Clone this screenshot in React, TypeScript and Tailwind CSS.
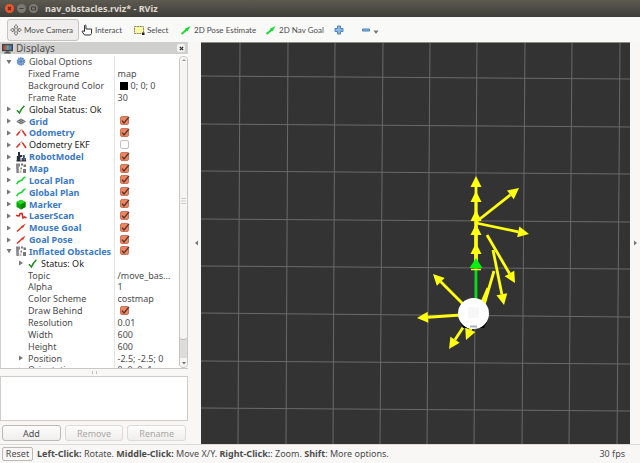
import React, { useState } from 'react';
import clsx from 'clsx';

type IconName =
	| 'gear'
	| 'ok'
	| 'grid'
	| 'odometry'
	| 'robot'
	| 'map'
	| 'path'
	| 'marker'
	| 'laser'
	| 'goal';

interface DisplayRow {
	label: string;
	value?: string;
	checked?: boolean;
	icon?: IconName;
	enabled?: boolean;
	strong?: boolean;
	nested?: boolean;
	swatch?: boolean;
	arrow?: 'open' | 'closed';
}

const rows: DisplayRow[] = [
	{ label: 'Global Options', icon: 'gear', arrow: 'open' },
	{ label: 'Fixed Frame', value: 'map' },
	{ label: 'Background Color', value: '0; 0; 0', swatch: true },
	{ label: 'Frame Rate', value: '30' },
	{ label: 'Global Status: Ok', icon: 'ok', arrow: 'closed', strong: true },
	{ label: 'Grid', icon: 'grid', arrow: 'closed', checked: true, enabled: true },
	{ label: 'Odometry', icon: 'odometry', arrow: 'closed', checked: true, enabled: true },
	{ label: 'Odometry EKF', icon: 'odometry', arrow: 'closed', checked: false, strong: true },
	{ label: 'RobotModel', icon: 'robot', arrow: 'closed', checked: true, enabled: true },
	{ label: 'Map', icon: 'map', arrow: 'closed', checked: true, enabled: true },
	{ label: 'Local Plan', icon: 'path', arrow: 'closed', checked: true, enabled: true },
	{ label: 'Global Plan', icon: 'path', arrow: 'closed', checked: true, enabled: true },
	{ label: 'Marker', icon: 'marker', arrow: 'closed', checked: true, enabled: true },
	{ label: 'LaserScan', icon: 'laser', arrow: 'closed', checked: true, enabled: true },
	{ label: 'Mouse Goal', icon: 'goal', arrow: 'closed', checked: true, enabled: true },
	{ label: 'Goal Pose', icon: 'goal', arrow: 'closed', checked: true, enabled: true },
	{ label: 'Inflated Obstacles', icon: 'map', arrow: 'open', checked: true, enabled: true },
	{ label: 'Status: Ok', icon: 'ok', arrow: 'closed', nested: true, strong: true },
	{ label: 'Topic', value: '/move_bas...' },
	{ label: 'Alpha', value: '1' },
	{ label: 'Color Scheme', value: 'costmap' },
	{ label: 'Draw Behind', checked: true },
	{ label: 'Resolution', value: '0.01' },
	{ label: 'Width', value: '600' },
	{ label: 'Height', value: '600' },
	{ label: 'Position', value: '-2.5; -2.5; 0', arrow: 'closed', nested: true },
	{ label: 'Orientation', value: '0; 0; 0; 1', arrow: 'closed', nested: true },
];

const RowIcon: React.FC<{ name: IconName }> = ({ name }) => (
	<svg viewBox="0 0 11 11" className="h-[11px] w-[11px] shrink-0" fill="none" aria-hidden="true">
		{name === 'gear' && (
			<>
				<circle cx="5" cy="5.5" r="3.4" fill="#8fb4e0" stroke="#5b8bc8" strokeWidth="1.8" strokeDasharray="1.5 .6" />
				<path d="M5 2.5v6M2 5.5h6M3 3.5l4 4M7 3.5l-4 4" stroke="#4878b4" strokeWidth=".6" />
			</>
		)}
		{name === 'ok' && <path d="M1 6.2 3.4 9Q5.5 4.5 8.4 1.8" stroke="#1d8a1d" strokeWidth="1.5" />}
		{name === 'grid' && (
			<>
				<path d="M.8 5.5 5 3l4.4 2.5L5 8z" fill="#b0b0b0" stroke="#666" strokeWidth=".9" />
				<path d="M3 4.2 7.2 6.8M7.2 4.2 3 6.8" stroke="#555" strokeWidth=".8" />
			</>
		)}
		{name === 'odometry' && (
			<>
				<path d="M.5 8.5 4 4.5" stroke="#e02a20" strokeWidth="1.5" />
				<path d="M4 4 6 2.6 6.8 4.6" stroke="#f08060" strokeWidth="1" />
				<path d="M6.5 3.8 10 9" stroke="#e02a20" strokeWidth="1.5" />
			</>
		)}
		{name === 'robot' && (
			<>
				<path d="M2 1h2v3h2.2v2H4.4v4H.8V5H2z" fill="#26303c" />
				<path d="M7 4h1.8v6H5.6V7H7z" fill="#39506e" />
				<path d="M9.4 7v3M.4 10h9.8" stroke="#222" strokeWidth=".9" />
			</>
		)}
		{name === 'map' && (
			<>
				<path d="M0 .5h4v3H2.8V10H.4z" fill="#858585" />
				<path d="M5 .5h2v2H5zM7.5 1.5H10V4H7.5zM4.5 4.5H6v2H4.5zM7 6h3v4H7z" fill="#777" />
				<path d="M3.5 7.5h2V10h-2z" fill="#bbb" />
			</>
		)}
		{name === 'path' && <path d="M.8 9.2C2 5.5 3.5 6 5.2 5.4 7 4.8 6.8 2.4 9.5 2" stroke="#18d92a" strokeWidth="1.6" />}
		{name === 'marker' && (
			<>
				<path d="M5 .8 9.5 3v5L5 10.5.5 8V3z" fill="#0aa80a" />
				<path d="M5 .8 9.5 3 5 5.4.5 3z" fill="#24dc24" />
				<path d="M5 5.4 9.5 3v5L5 10.5z" fill="#078407" />
			</>
		)}
		{name === 'laser' && <path d="M0 5.5 3.2 6 4 3.6 6 3.4 7 8 8.4 6.8 10.4 8" stroke="#e02020" strokeWidth="1.5" />}
		{name === 'goal' && (
			<>
				<path d="M1 9.5 7 4" stroke="#e2321e" strokeWidth="1.5" />
				<path d="M5.2 4.4 9.6 1.6 7 6z" fill="#e2321e" />
			</>
		)}
	</svg>
);

const TreeArrow: React.FC<{ state?: 'open' | 'closed' }> = ({ state }) => (
	<svg viewBox="0 0 6 6" className="h-[6px] w-[6px] shrink-0" aria-hidden="true">
		{state === 'closed' && <path d="M1 .5 5 3 1 5.5z" fill="#777" />}
		{state === 'open' && <path d="M.5 1h5L3 5.2z" fill="#777" />}
	</svg>
);

const CheckBox: React.FC<{ label: string; initial: boolean }> = ({ label, initial }) => {
	const [on, setOn] = useState(initial);
	return (
		<label className="ml-[2px] grid h-[10px] w-[10px]">
			<input
				type="checkbox"
				aria-label={label}
				checked={on}
				onChange={() => setOn(!on)}
				className="col-start-1 row-start-1 h-[9px] w-[9px] appearance-none rounded-[2px] border border-[#c4c0bc] bg-white checked:border-[#c8765a] checked:bg-[#ec8560]"
			/>
			{on && (
				<svg viewBox="0 0 10 10" className="pointer-events-none col-start-1 row-start-1" fill="none">
					<path d="M2 4.6 4 7 9 .8" stroke="#5b3226" strokeWidth="1.3" />
				</svg>
			)}
		</label>
	);
};

const Tree = () => (
	<table className="h-[320px] w-full table-fixed border-collapse leading-[11px]">
		<colgroup>
			<col className="w-[113px]" />
			<col />
		</colgroup>
		<tbody>
			{rows.map((row) => (
				<tr key={row.label}>
					<td className="border-r border-[#e4e4e4] p-0">
						<div
							className={clsx(
								'flex h-[11px] items-center whitespace-nowrap',
								row.nested ? 'pl-[17px]' : 'pl-[5px]',
							)}
						>
							<TreeArrow state={row.arrow} />
							{row.icon ? (
								<span className="mr-[2px] ml-1 flex">
									<RowIcon name={row.icon} />
								</span>
							) : (
								<span className={row.nested ? 'w-1' : 'w-4'} />
							)}
							<span
								className={clsx(
									row.enabled && 'font-bold text-[#3a79c4]',
									row.strong && 'text-[#222]',
								)}
							>
								{row.label}
							</span>
						</div>
					</td>
					<td className="p-0">
						<div className="flex h-[11px] items-center gap-[3px] pl-[3px] whitespace-nowrap">
							{row.swatch && <span className="ml-[2px] h-2 w-2 bg-black" />}
							{row.checked !== undefined && <CheckBox label={row.label} initial={row.checked} />}
							{row.value}
						</div>
					</td>
				</tr>
			))}
		</tbody>
	</table>
);

const ScrollBar = () => (
	<div className="mt-[2px] flex w-[9px] shrink-0 flex-col items-center rounded-[4px] border border-[#c9c7c4] bg-[#dedcda]">
		<div className="flex h-[283px] w-full flex-col items-center justify-between rounded-[4px] border-b border-[#b8b5b2] bg-[#f6f5f4]">
			<svg viewBox="0 0 6 6" className="h-[6px] w-[6px]">
				<path d="M1 4 3 2l2 2z" fill="#999" />
			</svg>
			<svg viewBox="0 0 5 6" className="h-[6px] w-[5px]" stroke="#bbb">
				<path d="M0 .5h5M0 3h5M0 5.5h5" strokeWidth=".7" />
			</svg>
			<span />
		</div>
		<div className="flex-1" />
		<div className="flex h-[9px] w-full items-center justify-center rounded-b-[4px] bg-[#f6f5f4]">
			<svg viewBox="0 0 6 6" className="h-[6px] w-[6px]">
				<path d="M1 2h4L3 4.5z" fill="#777" />
			</svg>
		</div>
	</div>
);

const PanelButton: React.FC<{ text: string; disabled?: boolean }> = ({ text, disabled = false }) => (
	<button
		type="button"
		disabled={disabled}
		className="h-4 flex-1 rounded-[3px] border border-[#bcb8b4] bg-linear-to-b from-[#fdfdfd] to-[#efeeec] leading-[13px] disabled:border-[#dcd9d6] disabled:text-[#aaa7a4]"
	>
		{text}
	</button>
);

const DisplaysPanel = () => (
	<section className="flex w-[188px] shrink-0 flex-col">
		<header className="flex h-3 items-center bg-[#cfcfce] pr-[3px] pl-[2px] text-[10px] leading-3">
			<svg viewBox="0 0 12 12" className="mr-[3px] h-[11px] w-[11px]">
				<path d="M0 1h12v8H0z" fill="#444" />
				<path d="M1.5 2.5h3v5h-3z" fill="#b85050" />
				<path d="M4.5 2.5h3v5h-3z" fill="#63a883" />
				<path d="M7.5 2.5h3v5h-3z" fill="#5a78c0" />
				<path d="M4 9h4v1h1.5v1.5h-7V10H4z" fill="#555" />
			</svg>
			<h2 className="flex-1">Displays</h2>
			<button type="button" aria-label="Close" className="flex h-2 w-2 items-center justify-center rounded-[2px] bg-[#f4f4f3]">
				<svg viewBox="0 0 6 6" className="h-[5px] w-[5px]">
					<path d="M1 1l4 4M5 1 1 5" stroke="#333" strokeWidth="1.5" />
				</svg>
			</button>
		</header>
		<div className="flex min-h-0 flex-1 overflow-hidden border-b border-[#c9c7c4] bg-white">
			<div className="min-w-0 flex-1 overflow-hidden border-l border-[#d4d2d0] pt-[2px]">
				<Tree />
			</div>
			<ScrollBar />
		</div>
		<div className="flex h-[7px] items-center justify-center">
			<span className="h-[3px] w-[5px] border-x border-[#c4c1be]" />
		</div>
		<div className="h-[45px] border border-[#cfcdca] bg-white" />
		<div className="flex gap-1 px-[2px] pt-1 pb-[3px]">
			<PanelButton text="Add" />
			<PanelButton text="Remove" disabled />
			<PanelButton text="Rename" disabled />
		</div>
	</section>
);

// Scene coordinates are pixels of the 3D view
const gridColumns = [[39, 37], [87, 85], [134, 132], [182, 179], [229, 226], [276, 273], [324, 321], [371, 368], [419, 416]];
const gridRows = [[34, 37], [82, 85], [129, 132], [177, 180], [224, 227], [271, 275], [319, 322], [366, 369]];
const arrows = [
	[275, 220, 275, 134],
	[275, 220, 275, 149],
	[275, 220, 275, 168],
	[275, 220, 275, 182],
	[275, 220, 275, 201],
	[275, 180, 318, 146],
	[275, 181, 328, 192],
	[286, 193, 314, 241],
	[292, 208, 303, 263],
	[287, 246, 265, 298],
	[280, 258, 248, 307],
	[262, 262, 232, 232],
	[260, 273, 216, 276],
];

const Arrow: React.FC<{ points: number[] }> = ({ points: [x1, y1, x2, y2] }) => {
	const length = Math.hypot(x2 - x1, y2 - y1);
	const ux = (x2 - x1) / length;
	const uy = (y2 - y1) / length;
	const bx = x2 - ux * 11;
	const by = y2 - uy * 11;
	return (
		<g fill="#ffff10" stroke="none">
			<line x1={x1} y1={y1} x2={bx} y2={by} stroke="#ffff10" strokeWidth="2.8" />
			<path d={`M${x2} ${y2}L${bx - uy * 5.5} ${by + ux * 5.5}L${bx + uy * 5.5} ${by - ux * 5.5}z`} />
		</g>
	);
};

const SceneView = () => (
	<div className="min-w-0 flex-1 overflow-hidden border-t border-[#8b8b89] bg-[#333333]">
		<svg viewBox="0 1 429 401" preserveAspectRatio="xMidYMid slice" className="h-full w-full" role="img" aria-label="3D view">
			<g stroke="#6a6a6a" strokeWidth="1">
				{gridColumns.map(([top, bottom]) => (
					<line key={top} x1={top} y1="0" x2={bottom} y2="402" />
				))}
				{gridRows.map(([left, right]) => (
					<line key={left} x1="0" y1={left} x2="429" y2={right} />
				))}
			</g>
			{arrows.map((points) => (
				<Arrow key={points.join()} points={points} />
			))}
			<path d="M293 229 283 263" stroke="#ffff10" strokeWidth="2.8" />
			{/* Current pose */}
			<path d="M275 226V258" stroke="#08dc18" strokeWidth="2.8" />
			<path d="M275 216 281.5 226h-13z" fill="#08f010" />
			<path d="M270 227.5h10" stroke="#e8ff20" strokeWidth="1.5" />
			{/* Robot base */}
			<path d="M259 280l3 6h4l-1-6zM286 280l-3 6h-5l2-6z" fill="#000" />
			<circle cx="272.5" cy="271.5" r="15.5" fill="#fff" />
			<path d="M267 265h11v11h-11z" fill="#f7f7f7" />
			<path d="M269 284.5h7" stroke="#a8b0c0" strokeWidth="2" />
		</svg>
	</div>
);

const Splitter: React.FC<{ direction: 'left' | 'right' }> = ({ direction }) => (
	<div
		className={clsx(
			'flex shrink-0 items-center justify-end pr-[2px]',
			direction === 'left' ? 'w-[13px]' : 'w-[10px]',
		)}
	>
		<svg viewBox="0 0 5 6" className="h-[6px] w-[5px]" fill="#777">
			{direction === 'left' ? <path d="M4 .5v5L1 3z" /> : <path d="M1 .5v5L4 3z" />}
		</svg>
	</div>
);

const PoseIcon = () => (
	<svg viewBox="0 0 12 12" className="h-[12px] w-[12px] shrink-0">
		<path d="M1.5 10 7 5.5" stroke="#20d838" strokeWidth="2" />
		<path d="M4.5 5 10.5 2 7.5 7.5z" fill="#20d838" />
	</svg>
);

const toolClass = 'flex h-full shrink-0 items-center gap-[2px] whitespace-nowrap';

const Toolbar = () => (
	<nav className="flex h-[25px] shrink-0 items-center bg-[#f9f9f8] py-[2px] pl-[7px] font-[Lato,sans-serif] text-[8px]">
		<button
			type="button"
			className="flex h-[22px] w-[72px] shrink-0 items-center gap-[2px] rounded-[3px] border border-[#c6c3c0] bg-[#efeeec] pl-[2px] whitespace-nowrap"
		>
			<svg viewBox="0 0 12 12" className="h-[12px] w-[12px] shrink-0" fill="#e4e4e4" stroke="#666" strokeWidth=".8">
				<path d="M.5 6 3 4v1.3h2V3H4l2-2.5L8 3H7v2.3h2V4l2.500 2L9 8V6.700H7V9h1l-2 2.500L4 9h1V6.700H3V8z" />
			</svg>
			Move Camera
		</button>
		<button type="button" className={clsx(toolClass, 'ml-[2px] w-[52px]')}>
			<svg viewBox="0 0 12 12" className="h-[12px] w-[12px] shrink-0" fill="#fff" stroke="#333">
				<path d="M3.5 7.5v-6q.7-1 1.5 0V5h5.5v4.5l-1 1.5h-6L1 7.500q.5-1.200 2.500 0z" />
			</svg>
			Interact
		</button>
		<button type="button" className={clsx(toolClass, 'w-[47px]')}>
			<svg viewBox="0 0 12 12" className="h-[12px] w-[12px] shrink-0">
				<path d="M1.5 2.5h9v7h-9z" fill="#fbf7a8" stroke="#8c8860" strokeDasharray="2 .6" />
				<path d="M9 8.5h2.500V11H9z" fill="#222" />
			</svg>
			Select
		</button>
		<button type="button" className={clsx(toolClass, 'w-[85px]')}>
			<PoseIcon />
			2D Pose Estimate
		</button>
		<button type="button" className={clsx(toolClass, 'w-[69px]')}>
			<PoseIcon />
			2D Nav Goal
		</button>
		<button type="button" aria-label="Add tool" className={clsx(toolClass, 'w-[27px]')}>
			<svg viewBox="0 0 10 10" className="h-[10px] w-[10px]">
				<path d="M3.5 1h3v2.5H9v3H6.500V9h-3V6.500H1v-3h2.500z" fill="#8db8e4" stroke="#4d82bc" />
			</svg>
		</button>
		<button type="button" aria-label="Remove tool" className={toolClass}>
			<svg viewBox="0 0 10 10" className="h-[10px] w-[10px]">
				<path d="M1.5 4h7v2h-7z" fill="#8db8e4" stroke="#4d82bc" />
			</svg>
			<svg viewBox="0 0 6 10" className="h-[10px] w-[6px]">
				<path d="M.5 5.5h5L3 9z" fill="#777" />
			</svg>
		</button>
	</nav>
);

const TitleBar = () => (
	<header className="flex h-[17px] shrink-0 items-center gap-[3px] bg-linear-to-b from-[#5d5a51] to-[#403e39] pl-[5px]">
		<button type="button" aria-label="Close window" className="h-[9px] w-[9px] rounded-full bg-[#e9582f]">
			<svg viewBox="0 0 9 9" stroke="#6b2413" strokeWidth="1.2">
				<path d="M3 3l3 3M6 3 3 6" />
			</svg>
		</button>
		<button type="button" aria-label="Minimize" className="h-[9px] w-[9px] rounded-full bg-[#7b7971]">
			<svg viewBox="0 0 9 9" stroke="#403e39">
				<path d="M2.5 4.5h4" />
			</svg>
		</button>
		<button type="button" aria-label="Maximize" className="h-[9px] w-[9px] rounded-full bg-[#7b7971]">
			<svg viewBox="0 0 9 9" stroke="#403e39" fill="none">
				<path d="M2.5 3h4v3h-4z" />
			</svg>
		</button>
		<h1 className="ml-1 text-[9px] font-bold text-[#dfdbd2]">nav_obstacles.rviz* - RViz</h1>
	</header>
);

const StatusBar = () => (
	<footer className="flex h-[19px] shrink-0 items-center border-t border-[#dddbd8] pr-[15px] pl-[2px] whitespace-nowrap">
		<button type="button" className="h-[14px] w-[31px] rounded-[2px] border border-[#bcb8b4] bg-[#f8f7f6] leading-3">
			Reset
		</button>
		<p className="flex-1 pl-1">
			<b>Left-Click:</b> Rotate. <b>Middle-Click:</b> Move X/Y. <b>Right-Click:</b>: Zoom. <b>Shift</b>: More options.
		</p>
		<span>30 fps</span>
	</footer>
);

const App = () => (
	<div className="flex h-screen flex-col bg-[#f8f7f6] font-['Noto_Sans','Open_Sans',sans-serif] text-[9px] text-[#4c4c4c]">
		<TitleBar />
		<Toolbar />
		<main className="flex min-h-0 flex-1">
			<DisplaysPanel />
			<Splitter direction="left" />
			<SceneView />
			<Splitter direction="right" />
		</main>
		<StatusBar />
	</div>
);

export default App;
